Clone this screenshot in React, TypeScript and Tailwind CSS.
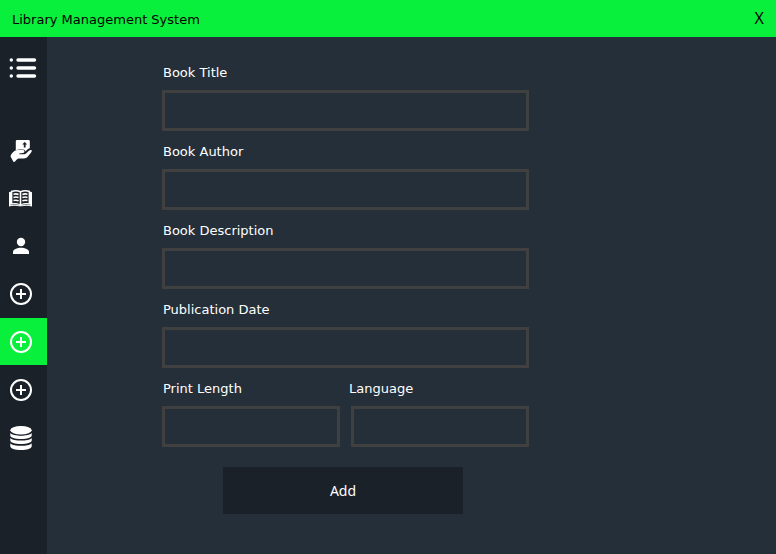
import React from "react";

function ListIcon() {
  return (
    <svg viewBox="0 0 28 24" className="h-6 w-7" fill="none" stroke="white" strokeWidth="3.4" strokeLinecap="round" aria-hidden="true">
      <path d="M9 4h16.500M9 12h16.500M9 20h16.500" />
      <path d="M2.300 4h.01M2.300 12h.01M2.300 20h.01" />
    </svg>
  );
}

function LendIcon() {
  return (
    <svg viewBox="0 0 24 24" className="size-6" fill="white" aria-hidden="true">
      <path
        fillRule="evenodd"
        d="M8 2h11.600a1.200 1.200 0 0 1 1.200 1.200v7.100c-1 .1-1.900.6-2.700 1.500l-1.600 1.600c-.3-1.200-1.300-1.900-2.700-1.900h-3.400c-1.300 0-2.400.2-3.600.7V3.200A1.200 1.200 0 0 1 8 2zM15.700 4l-2.500 2.600h1.600v2.800h1.800V6.600h1.600z"
      />
      <path d="M2.200 16.400c1.500-2.500 4-4.400 6.800-4.400h4.400c1.300 0 2.100.6 2.100 1.400 0 .9-.8 1.500-1.700 1.700l-3.600.5v.7h4.200c1.300 0 2.400-.5 3.200-1.300l2.300-2.200c.9-.8 2.400-1 2.800-.3.300.6-.2 1.400-.8 2.200l-3.200 4c-1 1.200-2.200 1.700-3.800 1.700H10.400c-1.500 0-2.200.6-2.800 1.400L6 23.600c-.5.500-1.200.5-1.600.1l-2.600-4.600c-.4-.9-.1-1.900.4-2.700z" />
    </svg>
  );
}

function BookIcon() {
  return (
    <svg viewBox="0 0 24 24" className="size-6" aria-hidden="true">
      <path fill="white" d="M0 6.200l2-.6V4.800C5.200 3.600 9 3.600 11.500 5 14 3.600 17.800 3.600 21 4.800v.8l2 .6v14.200c-3.400-.8-7-.9-10.200-.1h-2.600c-3.200-.8-6.800-.7-10.200.1z" />
      <path fill="#1b2129" d="M3.400 6c2.400-.8 5.200-.8 7.300.3v11.600c-2.200-1-4.900-1.100-7.300-.6zM12.300 6.300c2.100-1.100 4.900-1.100 7.300-.3v11.300c-2.400-.5-5.100-.4-7.300.6z" />
      <path fill="none" stroke="#1b2129" strokeWidth=".5" d="M1.400 18.900c3-.6 6.200-.5 8.900.2M21.600 18.900c-3-.6-6.200-.5-8.900.2" />
      <path
        fill="none"
        stroke="white"
        strokeWidth="1.600"
        d="M4.500 8.200c1.700-.5 3.600-.4 5.100.2M4.500 11.400c1.700-.5 3.600-.4 5.100.2M4.500 14.600c1.700-.5 3.600-.4 5.100.2M13.400 8.400c1.500-.6 3.400-.7 5.100-.2M13.400 11.600c1.500-.6 3.400-.7 5.100-.2M13.400 14.800c1.500-.6 3.400-.7 5.100-.2"
      />
    </svg>
  );
}

function PersonIcon() {
  return (
    <svg viewBox="0 0 24 24" className="size-6" fill="white" aria-hidden="true">
      <circle cx="12" cy="8" r="4.200" />
      <path d="M4 20v-2c0-2.700 4-4.300 8-4.300s8 1.600 8 4.300v2z" />
    </svg>
  );
}

function PlusIcon() {
  return (
    <svg viewBox="0 0 24 24" className="size-6" fill="none" stroke="white" strokeWidth="2" aria-hidden="true">
      <circle cx="12" cy="12" r="10" />
      <path d="M12 7v10M7 12h10" />
    </svg>
  );
}

function DatabaseIcon() {
  return (
    <svg viewBox="0 0 24 24" className="size-6" fill="white" aria-hidden="true">
      <ellipse cx="12" cy="4.200" rx="10.700" ry="4.200" />
      <path d="M1.300 7c1.700 1.900 6 2.700 10.700 2.700s9-.8 10.700-2.700v2.500c0 2-4.700 3.500-10.700 3.500S1.300 11.500 1.300 9.500z" />
      <path d="M1.300 12c1.700 1.900 6 2.500 10.700 2.500s9-.6 10.700-2.500v2.600c0 2-4.700 3.500-10.700 3.500S1.300 16.600 1.300 14.600z" />
      <path d="M1.300 17.200c1.700 1.900 6 2.500 10.700 2.500s9-.6 10.700-2.500v3c0 2.200-4.700 3.800-10.700 3.800S1.300 22.400 1.300 20.200z" />
    </svg>
  );
}

const navItems: { label: string; Icon: () => React.ReactElement; active?: boolean }[] = [
  { label: "Lend book", Icon: LendIcon },
  { label: "Books", Icon: BookIcon },
  { label: "Members", Icon: PersonIcon },
  { label: "Add member", Icon: PlusIcon },
  { label: "Add book", Icon: PlusIcon, active: true },
  { label: "Add loan", Icon: PlusIcon },
  { label: "Database", Icon: DatabaseIcon },
];

const labelClass = "block pl-px text-[13px] leading-4";
const inputClass = "block h-[41px] w-full border-3 border-[#404040] bg-transparent px-2 text-[13px] outline-none focus:border-[#08f03c]";

function Field({ id, label }: { id: string; label: string }) {
  return (
    <div className="flex flex-col gap-[9px]">
      <label htmlFor={id} className={labelClass}>{label}</label>
      <input id={id} type="text" className={inputClass} />
    </div>
  );
}

export default function App() {
  return (
    <div className="flex min-h-screen flex-col bg-[#252f3a] font-['DejaVu_Sans',sans-serif] text-white">
      <header className="flex h-[37px] items-center justify-between bg-[#08f03c] px-3 text-black">
        <h1 className="pt-0.5 text-[13px] leading-4">Library Management System</h1>
        <button type="button" aria-label="Close" className="pb-0.5 font-['Noto_Sans',sans-serif] text-base leading-5">X</button>
      </header>
      <div className="flex flex-1">
        <nav className="flex w-[47px] shrink-0 flex-col gap-px bg-[#1b2129] pt-[7px]">
          <button type="button" aria-label="Menu" className="mb-[34px] flex h-[47px] items-center pl-[9px]">
            <ListIcon />
          </button>
          {navItems.map(({ label, Icon, active }) => (
            <button
              key={label}
              type="button"
              aria-label={label}
              className={active ? "flex h-[47px] items-center bg-[#08f03c] pl-[9px]" : "flex h-[47px] items-center pl-[9px]"}
            >
              <Icon />
            </button>
          ))}
        </nav>
        <main className="flex-1 pt-7 pl-[115px]">
          <form className="flex max-w-[367px] flex-col gap-[13px]" onSubmit={(e) => e.preventDefault()}>
            <Field id="title" label="Book Title" />
            <Field id="author" label="Book Author" />
            <Field id="description" label="Book Description" />
            <Field id="date" label="Publication Date" />
            <div className="flex flex-col gap-[9px]">
              <div className="grid grid-cols-2 gap-[5px]">
                <label htmlFor="length" className={labelClass}>Print Length</label>
                <label htmlFor="language" className={labelClass}>Language</label>
              </div>
              <div className="grid grid-cols-2 gap-[11px]">
                <input id="length" type="text" className={inputClass} />
                <input id="language" type="text" className={inputClass} />
              </div>
            </div>
            <button type="submit" className="mt-[7px] ml-[61px] h-[47px] w-60 bg-[#1b2129] font-['Noto_Sans',sans-serif] text-sm">
              Add
            </button>
          </form>
        </main>
      </div>
    </div>
  );
}
